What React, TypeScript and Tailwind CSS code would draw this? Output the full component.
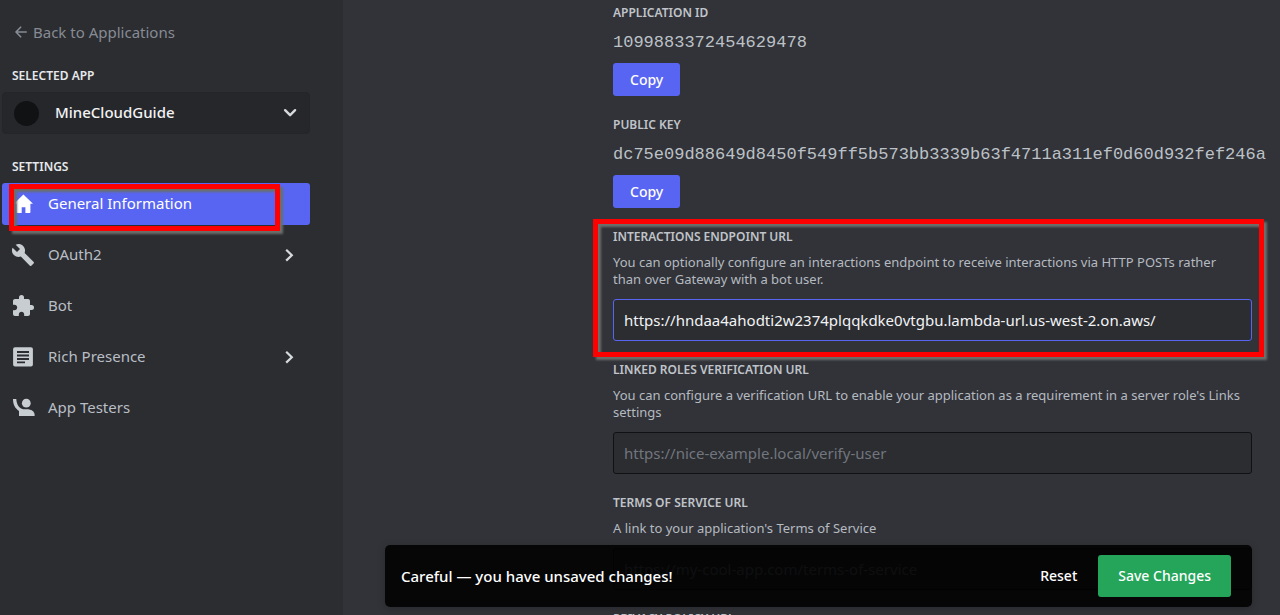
import type { ReactNode } from "react";
import { MdBuild, MdExtension } from "react-icons/md";

function BackArrow() {
  return (
    <svg viewBox="0 0 12 12" className="size-3 shrink-0" fill="none" stroke="currentColor" strokeWidth="1.6" strokeLinecap="round" strokeLinejoin="round" aria-hidden="true">
      <path d="M11.2 6H1M5.6 1.2 1 6l4.6 4.8" />
    </svg>
  );
}

function ChevronRight() {
  return (
    <svg viewBox="0 0 16 16" className="size-4 shrink-0 text-[#d6d9dd]" fill="none" stroke="currentColor" strokeWidth="2.2" aria-hidden="true">
      <path d="m5.2 2.8 5.6 5.4-5.6 5.4" />
    </svg>
  );
}

function ChevronDown() {
  return (
    <svg viewBox="0 0 16 16" className="size-4 shrink-0 text-[#d6d9dd]" fill="none" stroke="currentColor" strokeWidth="2.4" strokeLinecap="round" strokeLinejoin="round" aria-hidden="true">
      <path d="m3.1 5.2 5 5 5-5" />
    </svg>
  );
}

function HomeIcon() {
  return (
    <svg viewBox="0 0 24 24" className="size-6" fill="currentColor" aria-hidden="true">
      <path d="M12.4 2.6 3 11.8h2.6v8.5c0 .4.2.6.6.6h4.5v-5.6h3.7v5.6h4.4c.4 0 .6-.2.6-.6v-8.5H22z" />
    </svg>
  );
}

function ArticleIcon() {
  return (
    <svg viewBox="0 0 24 24" className="size-6" fill="currentColor" aria-hidden="true">
      <path
        fillRule="evenodd"
        d="M4 2.2h16a1.9 1.9 0 0 1 1.9 1.9v15.4a1.9 1.9 0 0 1-1.9 1.9H4a1.9 1.9 0 0 1-1.900-1.900V4.100A1.900 1.900 0 0 1 4 2.200zM6 6v2h12V6zm0 3.600v2h12v-2zm0 3.500v2h12v-2zm0 3.300v1.900h8v-1.900z"
      />
    </svg>
  );
}

function TesterIcon() {
  return (
    <svg viewBox="0 0 24 24" className="size-6" fill="currentColor" aria-hidden="true">
      <circle cx="15.3" cy="7.2" r="4.4" />
      <path d="M2 3h3.300c.2 5 2.600 9.300 7 10.200h3.700c4.300 0 7.600 2.200 7.600 5.400v1.500H8v-5.200C4.300 12.600 2 8.700 2 3z" />
    </svg>
  );
}

type NavItemProps = {
  icon: ReactNode;
  label: string;
  expandable?: boolean;
  active?: boolean;
};

function NavItem({ icon, label, expandable, active }: NavItemProps) {
  return (
    <li className="relative">
      <a
        href="#"
        aria-current={active ? "page" : undefined}
        className={
          active
            ? "flex h-[42px] items-center gap-[13px] rounded-[3px] bg-[#5865f2] pr-[13px] pl-[9px] text-[15px] text-white"
            : "flex h-[42px] items-center gap-[13px] rounded-[3px] pr-[13px] pl-[9px] text-[15px] text-[#b9bec5]"
        }
      >
        <span className={active ? "text-white" : "text-[#c8cdd2]"}>{icon}</span>
        <span className="flex-1 pb-0.5">{label}</span>
        {expandable && <ChevronRight />}
      </a>
      {active && (
        <div className="pointer-events-none absolute top-px right-[30px] -bottom-[6px] left-[7px] border-[5px] border-[#fe0000] drop-shadow-[3px_3px_1px_#6b6e6b]" />
      )}
    </li>
  );
}

function CopyField({ label, value }: { label: string; value: string }) {
  return (
    <section className="flex flex-col items-start">
      <h2 className="text-xs leading-4 font-semibold text-[#c0c4ca] uppercase">{label}</h2>
      <p className="mt-[10px] font-['Liberation_Mono',monospace] text-[17px] leading-6 whitespace-nowrap text-[#bcc1c7]">{value}</p>
      <button type="button" className="mt-2 h-[33px] rounded-[3px] bg-[#5865f2] px-[17px] text-sm font-medium text-white">
        Copy
      </button>
    </section>
  );
}

type UrlFieldProps = {
  id: string;
  label: string;
  description: string;
  value?: string;
  placeholder?: string;
  highlighted?: boolean;
};

function UrlField({ id, label, description, value, placeholder, highlighted }: UrlFieldProps) {
  return (
    <section className="relative flex flex-col">
      <label htmlFor={id} className="text-xs leading-4 font-semibold text-[#c0c4ca] uppercase">
        {label}
      </label>
      <p className="mt-[9px] pr-2 text-[13px] leading-[17px] text-[#b5bac1]">{description}</p>
      <input
        id={id}
        type="url"
        defaultValue={value}
        placeholder={placeholder}
        className={
          highlighted
            ? "mt-[11px] h-[42px] rounded-[3px] border border-[#5865f2] bg-[#2b2d31] px-[10px] text-[15px] text-[#f2f3f5] outline-none"
            : "mt-[11px] h-[42px] rounded-[3px] border border-[#101113] bg-[#2b2d31] px-[10px] text-[15px] text-[#f2f3f5] outline-none placeholder:text-[#72767e]"
        }
      />
      {highlighted && (
        <div className="pointer-events-none absolute -top-[10px] -right-3 -bottom-4 -left-5 border-[5px] border-[#fe0000] drop-shadow-[3px_3px_1px_#6b6e6b]" />
      )}
    </section>
  );
}

function Sidebar() {
  return (
    <aside className="w-[343px] shrink-0 bg-[#2b2d31] pr-[33px] pl-[2px]">
      <a href="#" className="mt-5 ml-[13px] flex h-6 items-center gap-[6px] text-[15px] text-[#878b94]">
        <BackArrow />
        Back to Applications
      </a>
      <label htmlFor="selected-app" className="mt-6 ml-[10px] block text-xs leading-4 font-semibold text-[#e6e8eb] uppercase">
        Selected App
      </label>
      <div className="mt-2 flex h-[42px] items-center rounded-[4px] border border-[#242528] bg-[#26272b] pr-[11px] pl-[11px]">
        <span className="size-[25px] shrink-0 rounded-full bg-[#111214]" />
        <select id="selected-app" className="ml-4 min-w-0 flex-1 appearance-none bg-transparent pb-0.5 text-[15px] font-medium text-[#f2f3f5] outline-none">
          <option>MineCloudGuide</option>
        </select>
        <ChevronDown />
      </div>
      <h2 className="mt-[25px] ml-[10px] text-xs leading-4 font-semibold text-[#e6e8eb] uppercase">Settings</h2>
      <nav className="mt-2">
        <ul className="flex flex-col gap-[9px]">
          <NavItem icon={<HomeIcon />} label="General Information" active />
          <NavItem icon={<MdBuild className="size-6" />} label="OAuth2" expandable />
          <NavItem icon={<MdExtension className="size-6" />} label="Bot" />
          <NavItem icon={<ArticleIcon />} label="Rich Presence" expandable />
          <NavItem icon={<TesterIcon />} label="App Testers" />
        </ul>
      </nav>
    </aside>
  );
}

export default function App() {
  return (
    <div className="flex h-screen overflow-hidden bg-[#313338] font-['Noto_Sans',sans-serif]">
      <Sidebar />
      <main className="relative min-w-0 flex-1 overflow-hidden">
        <form className="flex flex-col gap-[21px] pt-[5px] pr-7 pl-[270px]">
          <CopyField label="Application ID" value="1099883372454629478" />
          <CopyField label="Public Key" value="dc75e09d88649d8450f549ff5b573bb3339b63f4711a311ef0d60d932fef246a" />
          <UrlField
            id="interactions-url"
            label="Interactions Endpoint URL"
            description="You can optionally configure an interactions endpoint to receive interactions via HTTP POSTs rather than over Gateway with a bot user."
            value="https://hndaa4ahodti2w2374plqqkdke0vtgbu.lambda-url.us-west-2.on.aws/"
            highlighted
          />
          <UrlField
            id="verification-url"
            label="Linked Roles Verification URL"
            description="You can configure a verification URL to enable your application as a requirement in a server role's Links settings"
            placeholder="https://nice-example.local/verify-user"
          />
          <UrlField
            id="terms-url"
            label="Terms of Service URL"
            description="A link to your application's Terms of Service"
            placeholder="https://my-cool-app.com/terms-of-service"
          />
          <h2 className="text-xs leading-4 font-semibold text-[#c0c4ca] uppercase">Privacy Policy URL</h2>
        </form>
        <div className="absolute right-7 bottom-2 left-[42px] flex h-[62px] items-center rounded-[5px] bg-black/88 pr-[21px] pl-4 shadow-[0_2px_8px_rgba(0,0,0,0.2)]">
          <p className="flex-1 text-[15px] font-medium text-white">Careful — you have unsaved changes!</p>
          <button type="button" className="text-sm font-medium text-white">
            Reset
          </button>
          <button type="button" className="ml-[21px] h-[42px] rounded-[3px] bg-[#24a55a] px-5 text-sm font-medium text-white">
            Save Changes
          </button>
        </div>
      </main>
    </div>
  );
}
